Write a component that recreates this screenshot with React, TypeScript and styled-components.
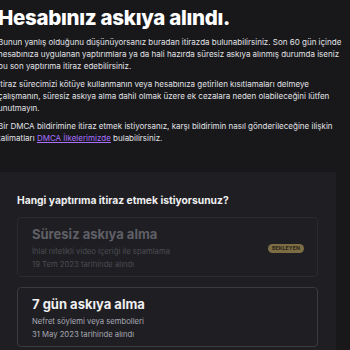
import React from 'react';
import styled, { createGlobalStyle } from 'styled-components';

const GlobalStyle = createGlobalStyle`
	html, body {
		margin: 0;
		padding: 0;
		background: #18181b;
		overflow: hidden;
	}
	body {
		font-family: Inter, 'Noto Sans', sans-serif;
		color: #efeff1;
	}
`;

const Page = styled.div`
	display: flex;
	flex-direction: column;
	width: 350px;
	height: 350px;
`;

const Intro = styled.section`
	display: flex;
	flex-direction: column;
	gap: 6px;
	margin-left: -2px;
	width: 348px;
`;

const Title = styled.h1`
	margin: 5px 0 -1px;
	font-size: 20.5px;
	font-weight: 800;
	letter-spacing: -0.3px;
	line-height: 26px;
	color: #ffffff;
`;

const Text = styled.p`
	margin: 0;
	font-size: 8px;
	line-height: 12px;
	color: #e2e2e6;
`;

const Link = styled.a`
	color: #a970ff;
	text-decoration: underline;
`;

const Panel = styled.section`
	margin-top: 28px;
	flex: 1;
	width: 336px;
	box-sizing: border-box;
	background: #1f1f23;
	padding: 20px 18px 0 17px;
`;

const Question = styled.h2`
	margin: 0 0 9px;
	font-size: 10.3px;
	font-weight: 700;
	line-height: 16px;
	color: #efeff1;
`;

const CardList = styled.div`
	display: flex;
	flex-direction: column;
	gap: 10px;
`;

const Card = styled.div<{ $muted?: boolean }>`
	display: flex;
	align-items: center;
	justify-content: space-between;
	padding: 6px 13px 5px 14px;
	border-radius: 4px;
	background: #1f1f23;
	border: 1px solid ${(p) => (p.$muted ? '#2a2a2f' : '#3a3a41')};
	color: ${(p) => (p.$muted ? '#5f5f66' : '#efeff1')};
`;

const CardBody = styled.div`
	display: flex;
	flex-direction: column;
	gap: 1px;
`;

const CardTitle = styled.div`
	margin-bottom: 1px;
	font-size: 13px;
	font-weight: 700;
	line-height: 20px;
`;

const CardMeta = styled.div<{ $muted?: boolean }>`
	font-size: 7.7px;
	line-height: 12px;
	color: ${(p) => (p.$muted ? '#4b4b52' : '#a8a8b3')};
`;

const Badge = styled.span`
	margin-top: 2px;
	padding: 1px 4px;
	border-radius: 8px;
	background: #7d6d45;
	color: #2a2416;
	font-size: 5.2px;
	font-weight: 700;
	letter-spacing: 0.1px;
	line-height: 7px;
`;

const App: React.FC = () => {
	return (
		<>
			<GlobalStyle />
			<Page>
				<Intro>
					<Title>Hesabınız askıya alındı.</Title>
					<Text>
						Bunun yanlış olduğunu düşünüyorsanız buradan itirazda bulunabilirsiniz. Son 60 gün içinde
						hesabınıza uygulanan yaptırımlara ya da hali hazırda süresiz askıya alınmış durumda iseniz
						bu son yaptırıma itiraz edebilirsiniz.
					</Text>
					<Text>
						İtiraz sürecimizi kötüye kullanmanın veya hesabınıza getirilen kısıtlamaları delmeye
						çalışmanın, süresiz askıya alma dahil olmak üzere ek cezalara neden olabileceğini lütfen
						unutmayın.
					</Text>
					<Text>
						Bir DMCA bildirimine itiraz etmek istiyorsanız, karşı bildirimin nasıl gönderileceğine ilişkin
						talimatları <Link href="#">DMCA İlkelerimizde</Link> bulabilirsiniz.
					</Text>
				</Intro>
				<Panel>
					<Question>Hangi yaptırıma itiraz etmek istiyorsunuz?</Question>
					<CardList>
						<Card $muted>
							<CardBody>
								<CardTitle>Süresiz askıya alma</CardTitle>
								<CardMeta $muted>İhlal nitelikli video içeriği ile spamlama</CardMeta>
								<CardMeta $muted>19 Tem 2023 tarihinde alındı</CardMeta>
							</CardBody>
							<Badge>BEKLEYEN</Badge>
						</Card>
						<Card>
							<CardBody>
								<CardTitle>7 gün askıya alma</CardTitle>
								<CardMeta>Nefret söylemi veya sembolleri</CardMeta>
								<CardMeta>31 May 2023 tarihinde alındı</CardMeta>
							</CardBody>
						</Card>
					</CardList>
				</Panel>
			</Page>
		</>
	);
};

export default App;
